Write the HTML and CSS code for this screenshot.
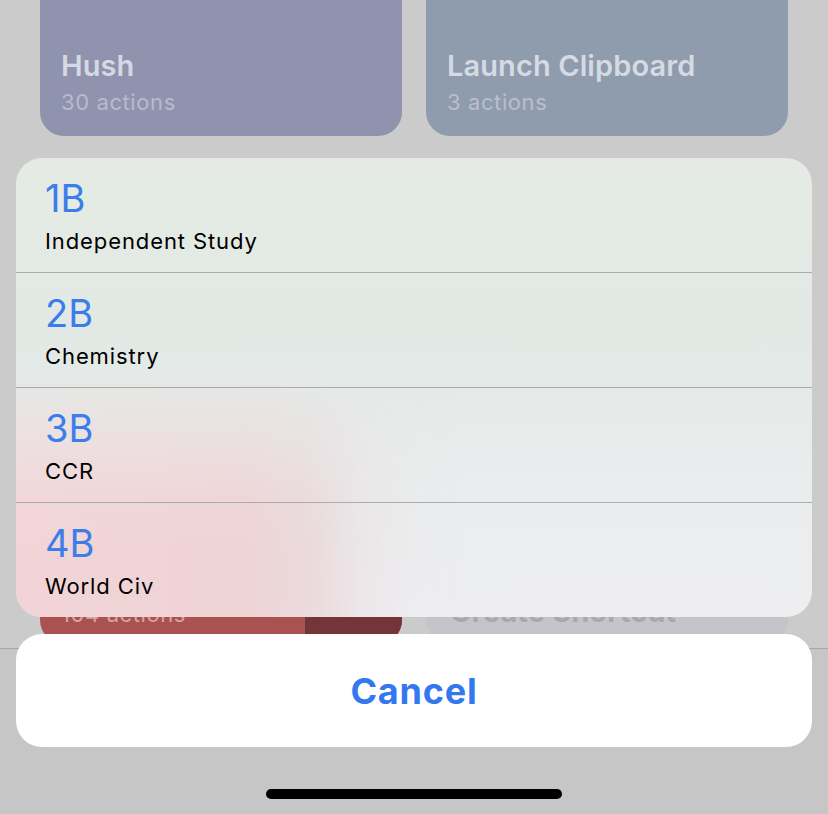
FILE: index.html
```html
<!DOCTYPE html>
<html lang="en">
<head>
<meta charset="utf-8">
<title>Choose Period</title>
<link rel="stylesheet" href="styles.css">
</head>
<body>
<div class="screen">
  <main class="library">
    <div class="grid">
      <div class="card card-hush">
        <div class="card-title">Hush</div>
        <div class="card-sub">30 actions</div>
      </div>
      <div class="card card-clip">
        <div class="card-title">Launch Clipboard</div>
        <div class="card-sub">3 actions</div>
      </div>
      <div class="card card-hidden-a"></div>
      <div class="card card-hidden-b"></div>
      <div class="card card-red">
        <div class="red-main">
          <div class="card-sub">104 actions</div>
        </div>
        <div class="red-side"></div>
      </div>
      <div class="card card-create">
        <div class="card-title create-title">Create Shortcut</div>
      </div>
    </div>
  </main>
  <footer class="tabbar"></footer>

  <div class="action-sheet">
    <div class="sheet-group">
      <div class="sheet-row">
        <div class="row-num">1B</div>
        <div class="row-name">Independent Study</div>
      </div>
      <div class="sheet-row">
        <div class="row-num">2B</div>
        <div class="row-name">Chemistry</div>
      </div>
      <div class="sheet-row">
        <div class="row-num">3B</div>
        <div class="row-name">CCR</div>
      </div>
      <div class="sheet-row">
        <div class="row-num">4B</div>
        <div class="row-name">World Civ</div>
      </div>
    </div>
    <button class="cancel">Cancel</button>
  </div>

  <div class="home-indicator"></div>
</div>
</body>
</html>
```
FILE: styles.css
```css
* { box-sizing: border-box; }

html, body {
  margin: 0;
  padding: 0;
}

body {
  width: 828px;
  height: 814px;
  overflow: hidden;
  background: #c6c6c6;
  font-family: Inter, "Noto Sans", "Liberation Sans", sans-serif;
}

.screen {
  position: relative;
  width: 828px;
  height: 814px;
  display: flex;
  flex-direction: column;
}

.library {
  height: 648px;
  overflow: hidden;
  background: #cbcbcb;
  flex: none;
}

.grid {
  margin-top: -94px;
  padding: 0 40px;
  display: grid;
  grid-template-columns: 362px 362px;
  grid-auto-rows: 230px;
  column-gap: 24px;
  row-gap: 24px;
}

.card {
  border-radius: 24px;
  display: flex;
  flex-direction: column;
  justify-content: flex-end;
  padding: 0 21px 21px;
  overflow: hidden;
}

.card-hush { background: #8f93ae; }
.card-clip { background: #8f9cae; }
.card-hidden-a { background: #a4b0a2; }
.card-hidden-b { background: #a8b3b0; }

.card-title {
  font-size: 29px;
  font-weight: 600;
  letter-spacing: 0.1px;
  line-height: 34px;
  color: rgba(235, 236, 242, 0.78);
}

.card-sub {
  font-size: 22px;
  font-weight: 400;
  letter-spacing: 0.6px;
  line-height: 26px;
  margin-top: 6px;
  color: rgba(220, 222, 232, 0.55);
}

.card-red {
  flex-direction: row;
  padding: 0;
  background: #a85350;
}

.red-main {
  flex: 1;
  display: flex;
  flex-direction: column;
  justify-content: flex-end;
  padding: 0 21px 17px;
}

.red-main .card-sub {
  color: rgba(235, 190, 190, 0.75);
}

.red-side {
  width: 97px;
  background: #733537;
}

.card-create {
  background: #c4c5c9;
  padding: 0 24px 15px;
}

.create-title {
  color: #a8a9ad;
  font-weight: 700;
}

.tabbar {
  flex: 1;
  border-top: 1px solid #a6a6a6;
  background: #c6c6c6;
}

.action-sheet {
  position: absolute;
  left: 16px;
  right: 16px;
  top: 158px;
  display: flex;
  flex-direction: column;
  gap: 17px;
}

.sheet-group {
  position: relative;
  border-radius: 26px;
  overflow: hidden;
  background: linear-gradient(to bottom, #e5ebe4 0%, #e2e9e5 38%, #e9ecec 66%, #eeeef1 100%);
}

.sheet-group::before {
  content: "";
  position: absolute;
  left: 0;
  top: 215px;
  bottom: 0;
  width: 450px;
  background: linear-gradient(to right, #f2d4d6 0px, #eed3d5 230px, rgba(234, 212, 214, 0.8) 290px, rgba(234, 222, 224, 0.45) 345px, rgba(236, 232, 234, 0.15) 400px, rgba(236, 236, 238, 0) 450px);
  -webkit-mask-image: linear-gradient(to bottom, transparent 0%, rgba(0,0,0,0.5) 28%, rgba(0,0,0,0.9) 52%, #000 72%);
  mask-image: linear-gradient(to bottom, transparent 0%, rgba(0,0,0,0.5) 28%, rgba(0,0,0,0.9) 52%, #000 72%);
}

.sheet-row {
  position: relative;
  height: 114px;
  padding: 20px 29px 0;
}

.sheet-row + .sheet-row {
  height: 115px;
  border-top: 1px solid #a9adab;
}

.row-num {
  font-size: 38px;
  line-height: 40px;
  color: #3b7deb;
  letter-spacing: 0;
}

.row-name {
  margin-top: 10px;
  font-size: 22px;
  line-height: 26px;
  letter-spacing: 0.9px;
  color: #000;
}

.cancel {
  height: 113px;
  border: none;
  border-radius: 26px;
  background: #ffffff;
  font-family: Inter, "Noto Sans", "Liberation Sans", sans-serif;
  font-size: 36px;
  font-weight: 700;
  color: #3478f0;
  letter-spacing: 0.8px;
  padding: 0;
}

.home-indicator {
  position: absolute;
  left: 266px;
  bottom: 15px;
  width: 296px;
  height: 10px;
  border-radius: 5px;
  background: #000;
}
```
